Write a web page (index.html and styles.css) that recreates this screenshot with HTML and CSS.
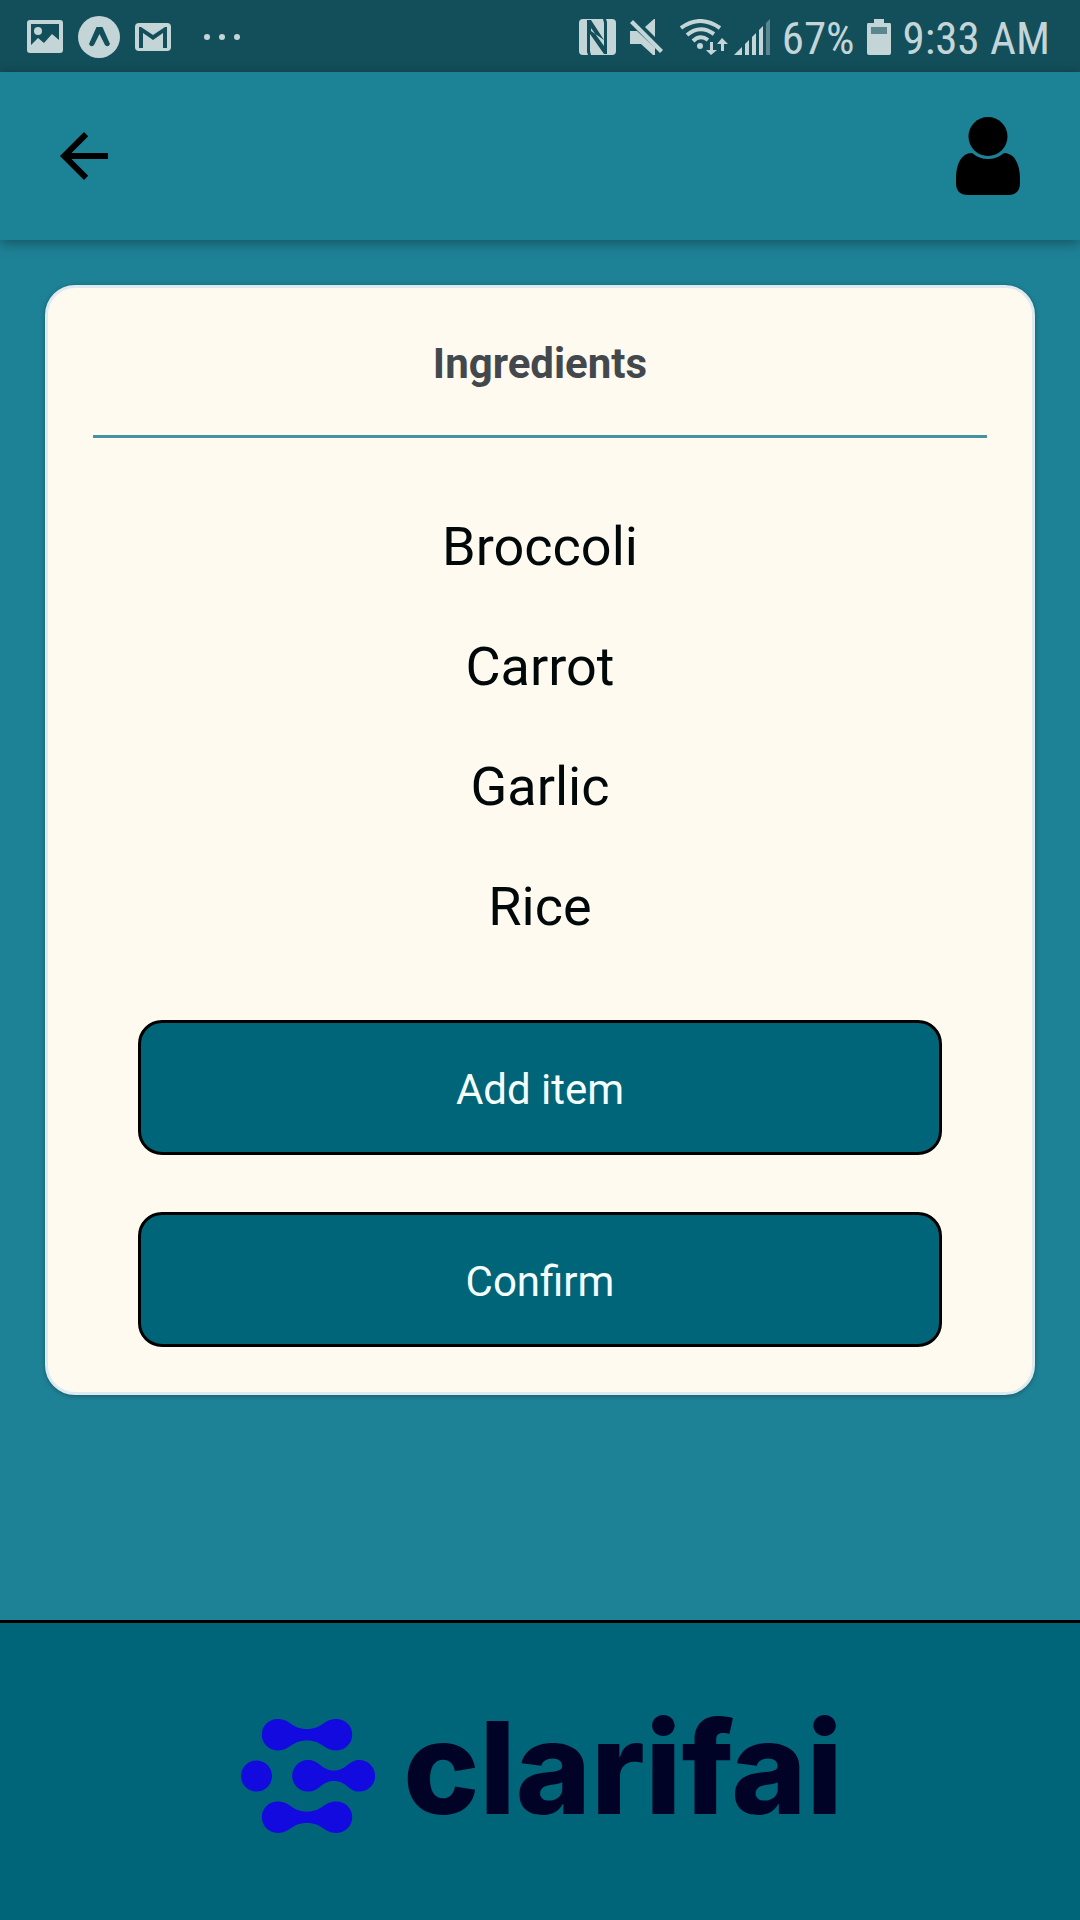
FILE: index.html
```html
<!DOCTYPE html>
<html lang="en">
<head>
<meta charset="utf-8">
<meta name="viewport" content="width=device-width, initial-scale=1">
<title>Ingredients</title>
<link rel="stylesheet" href="styles.css">
</head>
<body>
<div class="status-bar">
  <div class="status-group status-notifications">
    <svg width="36" height="34" viewBox="0 0 36 34" aria-hidden="true"><path fill="currentColor" fill-rule="evenodd" d="M3 0H33Q36 0 36 3V30Q36 33 33 33H3Q0 33 0 30V3Q0 0 3 0ZM4 4V25L11 18L17 23L25 14L32 20V4Z"/><circle cx="11" cy="11" r="4" fill="currentColor"/></svg>
    <svg width="42" height="42" viewBox="0 0 42 42" aria-hidden="true"><circle cx="21" cy="21" r="21" fill="currentColor"/><path class="cutout" d="M18.500 11H24.500L32 28Q30 32 27 29L21.500 18L16 29Q13 32 11 28Z"/></svg>
    <svg width="36" height="28" viewBox="0 0 36 28" aria-hidden="true"><rect width="36" height="28" rx="4" fill="currentColor"/><path class="cutout" d="M4 25V4H6L18 12L30 4H32V25H28V10L18 17L8 10V25Z"/></svg>
    <svg class="more" width="36" height="8" viewBox="0 0 36 8" aria-hidden="true"><g fill="currentColor"><circle cx="3" cy="4" r="3"/><circle cx="18" cy="4" r="3"/><circle cx="33" cy="4" r="3"/></g></svg>
  </div>
  <div class="status-group status-system">
    <svg width="37" height="36" viewBox="0 0 37 36" aria-hidden="true"><rect width="37" height="36" rx="4" fill="currentColor"/><g class="cutout"><path d="M8 1H12L25 21V4L24 0H27L28 3V35H25L11 15V32L12 36H9L8 33Z"/></g><path d="M12 9L25 27V21L12 12Z" fill="currentColor"/></svg>
    <svg class="mute" width="34" height="36" viewBox="0 0 34 36" aria-hidden="true"><path fill="currentColor" d="M0 12H7L25 29V36H23L11 25H0ZM15 8L24 0H25V18ZM3 1L33 31L30 34L0 4Z"/></svg>
    <svg width="48" height="36" viewBox="0 0 48 36" aria-hidden="true"><g fill="none" stroke="currentColor" stroke-width="4"><path d="M1 9Q20-5 40 9M7 16Q20 5 34 15M13 22Q20 15 28 21"/></g><circle cx="20" cy="27" r="3" fill="currentColor"/><path fill="currentColor" d="M30 23H33V31H37L31 36L26 31H30ZM41 32H44V25H48L42 19L37 25H41Z"/></svg>
    <svg class="signal" width="36" height="36" viewBox="0 0 36 36" aria-hidden="true"><path fill="currentColor" d="M0 36L8 28V36ZM11 25L15 21V36H11ZM18 18L22 14V36H18ZM25 11L29 7V36H25Z"/><path class="faint" d="M32 4L36 0V36H32Z"/></svg>
    <span class="status-text">67%</span>
    <svg width="24" height="36" viewBox="0 0 24 36" aria-hidden="true"><path fill="currentColor" d="M7 0H17V4H23Q24 4 24 6V34Q24 36 22 36H2Q0 36 0 34V6Q0 4 1 4H7Z"/><path class="faint" d="M4 8H20V15H4Z"/></svg>
    <span class="status-text">9:33 AM</span>
  </div>
</div>
<header class="app-header">
  <button class="icon-button" type="button" aria-label="Back"><svg width="72" height="72" viewBox="0 0 24 24" aria-hidden="true"><path d="M20 11H7.830l5.590-5.590L12 4l-8 8 8 8 1.410-1.410L7.830 13H20z"/></svg></button>
  <button class="icon-button" type="button" aria-label="Profile"><svg width="64" height="78" viewBox="0 0 64 78" aria-hidden="true"><circle cx="32" cy="19.500" r="19.500"/><path d="M16 36C5 36 0 48 0 62V66Q0 78 12 78H52Q64 78 64 66V62C64 48 59 36 48 36Q41 42 32 42Q23 42 16 36Z"/></svg></button>
</header>
<main class="content">
  <section class="card">
    <h1 class="card-title">Ingredients</h1>
    <ul class="ingredients">
      <li>Broccoli</li>
      <li>Carrot</li>
      <li>Garlic</li>
      <li>Rice</li>
    </ul>
    <div class="actions">
      <button class="action" type="button">Add item</button>
      <button class="action" type="button">Confirm</button>
    </div>
  </section>
</main>
<footer class="brand">
  <svg class="brand-mark" width="134" height="114" viewBox="0 0 134 114" aria-hidden="true">
    <circle cx="15.500" cy="57" r="15.500"/>
    <path id="link" d="M36.500 0C50 0 50 10 66 10S82 0 95.500 0A15.700 15.700 0 0 1 95.500 31.400C82 31.400 82 21.500 66 21.500S50 31.400 36.500 31.400A15.700 15.700 0 0 1 36.500 0Z"/>
    <use href="#link" y="82.500"/>
    <path d="M67 41C79 41 80 51.500 93 51.500S107 41 118.300 41A15.700 15.700 0 0 1 118.300 72.600C107 72.600 106 62 93 62S79 72.600 67 72.600A15.700 15.700 0 0 1 67 41Z"/>
  </svg>
  <span class="brand-name">clarifai</span>
</footer>
</body>
</html>
```
FILE: styles.css
```css
* {
  box-sizing: border-box;
}

body {
  margin: 0;
  min-height: 100vh;
  display: flex;
  flex-direction: column;
  background: #1e8296;
  color: #000809;
  font-family: Roboto, "Liberation Sans", sans-serif;
}

svg {
  display: block;
  flex: none;
}

button {
  font: inherit;
  cursor: pointer;
}

.status-bar {
  height: 72px;
  padding: 2px 30px 0 27px;
  display: flex;
  align-items: center;
  justify-content: space-between;
  background: #134f5a;
  color: #c4d5d8;
}

.status-group {
  display: flex;
  align-items: center;
}

.status-notifications {
  gap: 15px;
}

.more {
  margin-left: 18px;
}

.status-system {
  gap: 12px;
}

.mute {
  margin: 0 4px 0 2px;
}

.signal {
  margin-left: -6px;
}

.status-text {
  padding-top: 3px;
  font-family: "Roboto Condensed", "Liberation Sans Narrow", Roboto, sans-serif;
  font-size: 45px;
  line-height: 54px;
  white-space: nowrap;
}

.cutout {
  fill: #134f5a;
}

.faint {
  fill: #5b868e;
}

.app-header {
  height: 168px;
  padding: 0 60px 0 48px;
  display: flex;
  align-items: center;
  justify-content: space-between;
  background: #1c8295;
  box-shadow: 0 3px 12px rgba(0, 0, 0, 0.36);
}

.icon-button {
  padding: 0;
  border: 0;
  background: none;
  color: #000;
}

.content {
  flex: 1;
  padding: 45px;
}

.card {
  padding: 45px;
  border: 3px solid #ddebf0;
  border-radius: 30px;
  background: #fffaf0;
  box-shadow: 0 1px 5px rgba(0, 0, 0, 0.3);
  text-align: center;
}

.card-title {
  margin: 0;
  padding-bottom: 40px;
  border-bottom: 3px solid #4592a0;
  color: #43484d;
  font-size: 42px;
  line-height: 62px;
}

.ingredients {
  margin: 49px 0 53px;
  padding: 0;
  list-style: none;
  font-size: 54px;
  line-height: 120px;
}

.actions {
  padding: 0 45px;
  display: flex;
  flex-direction: column;
  gap: 57px;
}

.action {
  height: 135px;
  padding: 4px 0 0;
  border: 3px solid #000;
  border-radius: 24px;
  background: #006578;
  color: #f5ffff;
  font-size: 42px;
}

.brand {
  height: 300px;
  padding: 9px 0 0 4px;
  border-top: 3px solid #000;
  display: flex;
  align-items: center;
  justify-content: center;
  gap: 28px;
  background: #006578;
}

.brand-mark {
  fill: #130adf;
}

.brand-name {
  padding-bottom: 16px;
  color: #000326;
  font-family: Inter, Lato, sans-serif;
  font-size: 128px;
  font-weight: 800;
  line-height: 132px;
}
```
